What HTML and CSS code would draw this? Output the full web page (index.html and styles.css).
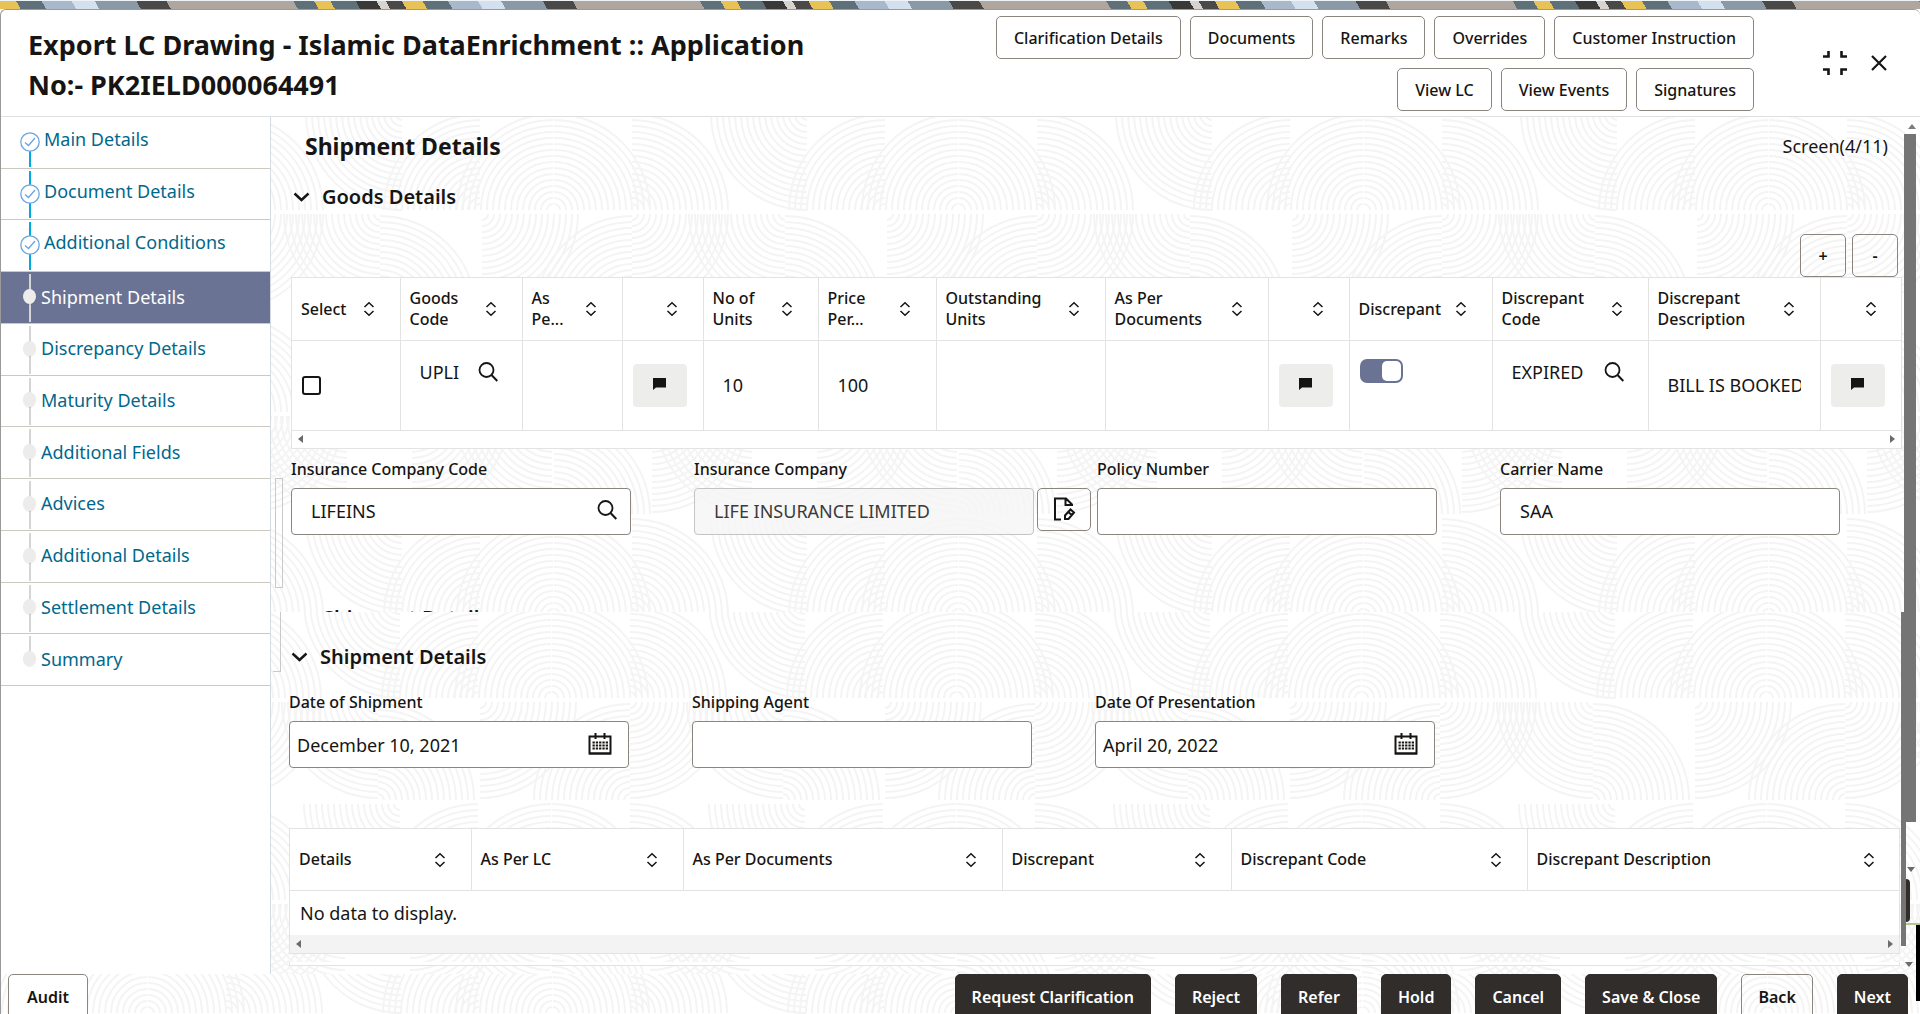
FILE: index.html
```html
<!DOCTYPE html>
<html lang="en">
<head>
    <meta charset="UTF-8">
    <title>Export LC Drawing - Islamic DataEnrichment</title>
    <link rel="stylesheet" href="styles.css">
</head>
<body>
    <!-- Shared icons -->
    <svg class="sprite" aria-hidden="true">
        <symbol id="sort" viewBox="0 0 12 16"><path d="M1.5 6 6 1.8 10.500 6M1.500 10 6 14.200 10.500 10" fill="none" stroke="#161513" stroke-width="1.500"/></symbol>
        <symbol id="search" viewBox="0 0 20 20"><circle cx="8.500" cy="8" r="7" fill="none" stroke="#161513" stroke-width="1.800"/><path d="M13.500 13 19.300 19" stroke="#161513" stroke-width="2"/></symbol>
        <symbol id="note" viewBox="0 0 13 12"><path d="M0 0H13V9.500H3L0 12Z" fill="#161513"/></symbol>
        <symbol id="chevron" viewBox="0 0 16 10"><path d="M1 1.500 8 8 15 1.500" fill="none" stroke="#161513" stroke-width="2.400"/></symbol>
        <symbol id="calendar" viewBox="0 0 24 22"><path d="M1.500 3.500H22.500V20.500H1.500Z" fill="none" stroke="#161513" stroke-width="2"/><path d="M7.500 0V6M16.500 0V6" stroke="#161513" stroke-width="2"/><path d="M4.500 9.500H20M4.500 12.500H20M4.500 15.500H20" stroke="#161513" stroke-width="2" stroke-dasharray="2.300 1"/><path d="M1 20.500H23" stroke="#161513" stroke-width="2"/></symbol>
        <symbol id="tick" viewBox="0 0 20 20"><circle cx="10" cy="10" r="9.200" fill="#fff" stroke="#6aa5e0" stroke-width="1.300"/><path d="M5 10.500 8.500 13.500 15 6" fill="none" stroke="#6aa5e0" stroke-width="1.300"/></symbol>
    </svg>

    <div class="strip"></div>

    <div class="window">
        <header class="header">
            <h1>Export LC Drawing - Islamic DataEnrichment :: Application<br>No:- PK2IELD000064491</h1>
            <div class="header-actions">
                <button class="btn">Clarification Details</button>
                <button class="btn">Documents</button>
                <button class="btn">Remarks</button>
                <button class="btn">Overrides</button>
                <button class="btn">Customer Instruction</button>
                <button class="btn">View LC</button>
                <button class="btn">View Events</button>
                <button class="btn">Signatures</button>
            </div>
            <div class="window-controls">
                <button aria-label="Collapse"><svg width="26" height="26" viewBox="0 0 26 26"><path d="M1 6.500H6.500V1M19.500 1V6.500H25M1 19.500H6.500V25M25 19.500H19.500V25" fill="none" stroke="#161513" stroke-width="2.600"/></svg></button>
                <button aria-label="Close"><svg width="18" height="18" viewBox="0 0 18 18"><path d="M2 2 16 16M16 2 2 16" stroke="#161513" stroke-width="2.200"/></svg></button>
            </div>
        </header>

        <div class="body">
            <nav class="sidebar">
                <ul class="steps">
                    <li class="done"><svg><use href="#tick"/></svg><a href="#">Main Details</a></li>
                    <li class="done"><svg><use href="#tick"/></svg><a href="#">Document Details</a></li>
                    <li class="done"><svg><use href="#tick"/></svg><a href="#">Additional Conditions</a></li>
                    <li class="active"><i></i><a href="#">Shipment Details</a></li>
                    <li><i></i><a href="#">Discrepancy Details</a></li>
                    <li><i></i><a href="#">Maturity Details</a></li>
                    <li><i></i><a href="#">Additional Fields</a></li>
                    <li><i></i><a href="#">Advices</a></li>
                    <li><i></i><a href="#">Additional Details</a></li>
                    <li><i></i><a href="#">Settlement Details</a></li>
                    <li><i></i><a href="#">Summary</a></li>
                </ul>
            </nav>

            <main class="content">
                <section class="goods">
                    <div class="page-title">
                        <h2>Shipment Details</h2>
                        <span>Screen(4/11)</span>
                    </div>
                    <h3><svg><use href="#chevron"/></svg>Goods Details</h3>
                    <div class="row-actions">
                        <button class="btn">+</button>
                        <button class="btn">-</button>
                    </div>

                    <div class="table-box">
                        <table>
                            <colgroup>
                                <col style="width:108px"><col style="width:122px"><col style="width:100px"><col style="width:81px"><col style="width:115px"><col style="width:118px"><col style="width:169px"><col style="width:163px"><col style="width:81px"><col style="width:143px"><col style="width:156px"><col style="width:172px"><col style="width:82px">
                            </colgroup>
                            <thead>
                                <tr>
                                    <th><div>Select<svg><use href="#sort"/></svg></div></th>
                                    <th><div>Goods<br>Code<svg><use href="#sort"/></svg></div></th>
                                    <th><div>As<br>Pe...<svg><use href="#sort"/></svg></div></th>
                                    <th><div><svg><use href="#sort"/></svg></div></th>
                                    <th><div>No of<br>Units<svg><use href="#sort"/></svg></div></th>
                                    <th><div>Price<br>Per...<svg><use href="#sort"/></svg></div></th>
                                    <th><div>Outstanding<br>Units<svg><use href="#sort"/></svg></div></th>
                                    <th><div>As Per<br>Documents<svg><use href="#sort"/></svg></div></th>
                                    <th><div><svg><use href="#sort"/></svg></div></th>
                                    <th><div>Discrepant<svg><use href="#sort"/></svg></div></th>
                                    <th><div>Discrepant<br>Code<svg><use href="#sort"/></svg></div></th>
                                    <th><div>Discrepant<br>Description<svg><use href="#sort"/></svg></div></th>
                                    <th><div><svg><use href="#sort"/></svg></div></th>
                                </tr>
                            </thead>
                            <tbody>
                                <tr>
                                    <td><input type="checkbox" aria-label="Select"></td>
                                    <td class="top"><div class="lookup"><input type="text" value="UPLI" aria-label="Goods Code"><svg><use href="#search"/></svg></div></td>
                                    <td></td>
                                    <td><button class="note" aria-label="Note"><svg><use href="#note"/></svg></button></td>
                                    <td><input class="cell" type="text" value="10" aria-label="No of Units"></td>
                                    <td><input class="cell" type="text" value="100" aria-label="Price Per Unit"></td>
                                    <td></td>
                                    <td></td>
                                    <td><button class="note" aria-label="Note"><svg><use href="#note"/></svg></button></td>
                                    <td class="top"><input class="switch" type="checkbox" checked aria-label="Discrepant"></td>
                                    <td class="top"><div class="lookup"><input type="text" value="EXPIRED" aria-label="Discrepant Code"><svg><use href="#search"/></svg></div></td>
                                    <td><input class="cell" type="text" value="BILL IS BOOKED" aria-label="Discrepant Description"></td>
                                    <td><button class="note" aria-label="Note"><svg><use href="#note"/></svg></button></td>
                                </tr>
                            </tbody>
                        </table>
                        <div class="hscroll"></div>
                    </div>

                    <div class="fields">
                        <div class="field">
                            <label for="insCode">Insurance Company Code</label>
                            <div class="control"><input type="text" id="insCode" value="LIFEINS"><svg class="search"><use href="#search"/></svg></div>
                        </div>
                        <div class="field">
                            <label for="insName">Insurance Company</label>
                            <div class="control"><input type="text" id="insName" value="LIFE INSURANCE LIMITED" disabled></div>
                            <button class="btn edit" aria-label="Edit"><svg width="24" height="24" viewBox="0 0 24 24"><path d="M9 22.500H3V1.500H14L20 7.500V9M13.500 2V8H20" fill="none" stroke="#161513" stroke-width="2"/><path d="M13 22V18.500L18.500 12.500 22 15.500 16.500 22ZM16 14.800 19.800 18" fill="none" stroke="#161513" stroke-width="2"/></svg></button>
                        </div>
                        <div class="field">
                            <label for="policy">Policy Number</label>
                            <div class="control"><input type="text" id="policy"></div>
                        </div>
                        <div class="field">
                            <label for="carrier">Carrier Name</label>
                            <div class="control"><input type="text" id="carrier" value="SAA"></div>
                        </div>
                    </div>
                    <!-- heading scrolled under the next panel -->
                    <div class="cutoff">Shipment Details</div>
                    <div class="splitter"></div>
                </section>

                <section class="shipment">
                    <h3><svg><use href="#chevron"/></svg>Shipment Details</h3>
                    <div class="fields">
                        <div class="field">
                            <label for="shipDate">Date of Shipment</label>
                            <div class="control"><input class="date" type="text" id="shipDate" value="December 10, 2021"><svg class="calendar"><use href="#calendar"/></svg></div>
                        </div>
                        <div class="field">
                            <label for="agent">Shipping Agent</label>
                            <div class="control"><input type="text" id="agent"></div>
                        </div>
                        <div class="field">
                            <label for="presDate">Date Of Presentation</label>
                            <div class="control"><input class="date" type="text" id="presDate" value="April 20, 2022"><svg class="calendar"><use href="#calendar"/></svg></div>
                        </div>
                    </div>

                    <div class="table-box">
                        <table>
                            <colgroup>
                                <col style="width:181px"><col style="width:212px"><col style="width:319px"><col style="width:229px"><col style="width:296px"><col style="width:373px">
                            </colgroup>
                            <thead>
                                <tr>
                                    <th><div>Details<svg><use href="#sort"/></svg></div></th>
                                    <th><div>As Per LC<svg><use href="#sort"/></svg></div></th>
                                    <th><div>As Per Documents<svg><use href="#sort"/></svg></div></th>
                                    <th><div>Discrepant<svg><use href="#sort"/></svg></div></th>
                                    <th><div>Discrepant Code<svg><use href="#sort"/></svg></div></th>
                                    <th><div>Discrepant Description<svg><use href="#sort"/></svg></div></th>
                                </tr>
                            </thead>
                            <tbody>
                                <tr><td class="empty" colspan="6">No data to display.</td></tr>
                            </tbody>
                        </table>
                        <div class="hscroll grey"></div>
                    </div>
                    <div class="box-end"></div>
                    <div class="splitter"></div>
                </section>

                <div class="scroll-up"></div>
                <div class="thumb"></div>
                <div class="inner-thumb"></div>
                <div class="edge-tab"></div>
                <div class="edge-line"></div>
                <div class="scroll-down mid"></div>
                <div class="scroll-down"></div>
            </main>
        </div>

        <footer class="footer">
            <button class="btn audit">Audit</button>
            <button class="btn dark">Request Clarification</button>
            <button class="btn dark">Reject</button>
            <button class="btn dark">Refer</button>
            <button class="btn dark">Hold</button>
            <button class="btn dark">Cancel</button>
            <button class="btn dark">Save &amp; Close</button>
            <button class="btn">Back</button>
            <button class="btn dark">Next</button>
        </footer>
    </div>
</body>
</html>
```
FILE: styles.css
```css
* { box-sizing: border-box; }
body { margin: 0; height: 100vh; overflow: hidden; display: flex; flex-direction: column; font-family: "Noto Sans", "Open Sans", sans-serif; font-size: 18px; color: #161513; background: #fff; }
h1, h2, h3, ul { margin: 0; padding: 0; }
button, input { font-family: inherit; color: inherit; }
input { font-size: 18px; }
.sprite { position: absolute; width: 0; height: 0; }

/* artwork strip above the window */
.strip { height: 9px; flex: none; border-top: 1px solid #eef3f8; background: repeating-linear-gradient(60deg, #e8c254 0 18px, #5f7079 18px 40px, #a9b9cb 40px 66px, #d5e0ee 66px 86px, #8b98a6 86px 122px, #4a4947 122px 148px, #aea69f 148px 258px, #5f7079 258px 276px, #e8c254 276px 290px, #5f7079 290px 312px, #3a3937 312px 330px, #d8d3cd 330px 338px, #4a4947 338px 352px); }

.window { flex: 1; min-height: 0; display: flex; flex-direction: column; border: 1px solid #9a9a9a; border-width: 1px 0 0 1px; border-radius: 6px 6px 0 0; }

.header { display: flex; height: 107px; flex: none; border-bottom: 1px solid #dfe0e1; padding: 6px 32px 0 27px; }
.header h1 { flex: 1; max-width: 850px; font-size: 27px; line-height: 40px; font-weight: 700; padding-top: 9px; }
.header-actions { display: flex; flex-wrap: wrap; justify-content: flex-end; align-content: flex-start; gap: 9px; width: 800px; margin-left: auto; }
.btn { height: 43px; padding: 0 17px; font-size: 16px; font-weight: 600; background: transparent; border: 1px solid #8b8580; border-radius: 5px; cursor: pointer; white-space: nowrap; }
.header .btn { background: #fff; font-weight: 500; }
.window-controls { display: flex; align-items: center; gap: 22px; margin-left: 68px; height: 94px; }
.window-controls button { border: 0; padding: 0; background: none; cursor: pointer; }
.window-controls svg { display: block; }

.body { flex: 1; min-height: 0; display: flex; }
.sidebar { width: 270px; flex: none; border-right: 1px solid #d5dbe3; background: #fff; }
.steps { list-style: none; height: 569px; display: grid; grid-auto-rows: 1fr; }
.steps li { position: relative; display: flex; align-items: center; border-bottom: 1px solid #cbc8c1; padding: 0 0 2px 40px; }
.steps li::before { content: ""; position: absolute; left: 28px; top: 2px; bottom: 1px; width: 2px; background: #d5d5d5; }
.steps li:last-child::before { bottom: 24px; }
.steps a { color: #00688c; text-decoration: none; font-size: 18px; }
.steps i { position: absolute; left: 22px; width: 13px; height: 15px; border-radius: 50%; background: #edeceb; box-shadow: 0 1px 1px #0001; }
.steps .done { padding: 0 0 7px 43px; }
.steps .done::before { background: #00a9e0; }
.steps .done:first-child::before { top: 26px; }
.steps .done svg { position: absolute; left: 19px; top: 15px; width: 20px; height: 20px; }
.steps .active { background: #6b7394; }
.steps .active a { color: #fff; }

.content { flex: 1; min-width: 0; position: relative; display: flex; flex-direction: column; }
.goods, .shipment, .footer {
    background-image: url('data:image/svg+xml,<svg xmlns="http://www.w3.org/2000/svg" width="405" height="405"><defs><path id="q" fill="none" stroke="%23f4f4f4" stroke-width="2" d="M6 0A6 6 0 0 1 0 6M12 0A12 12 0 0 1 0 12M18 0A18 18 0 0 1 0 18M24 0A24 24 0 0 1 0 24M30 0A30 30 0 0 1 0 30M36 0A36 36 0 0 1 0 36M42 0A42 42 0 0 1 0 42M48 0A48 48 0 0 1 0 48M54 0A54 54 0 0 1 0 54M60 0A60 60 0 0 1 0 60M66 0A66 66 0 0 1 0 66M72 0A72 72 0 0 1 0 72M78 0A78 78 0 0 1 0 78M84 0A84 84 0 0 1 0 84M90 0A90 90 0 0 1 0 90M96 0A96 96 0 0 1 0 96"/><g id="r"><use href="%23q" transform="translate(202 99) scale(1 -1)"/><use href="%23q" transform="translate(201 99) scale(-1 -1)"/><use href="%23q" transform="translate(280 99) scale(1 -1)"/><use href="%23q" transform="translate(128 99) scale(-1 -1)"/><use href="%23q" transform="translate(50 3) scale(-1 1)"/><use href="%23q" transform="translate(455 3) scale(-1 1)"/></g></defs><use href="%23r"/><use href="%23q" transform="translate(130 103)"/><use href="%23q" transform="translate(28 103) scale(-1 1)"/><use href="%23q" transform="translate(433 103) scale(-1 1)"/><use href="%23q" transform="translate(28 201) scale(1 -1)"/><use href="%23q" transform="translate(280 103)"/><use href="%23q" transform="translate(280 201) scale(-1 -1)"/><use href="%23r" transform="translate(0 202)"/><use href="%23q" transform="translate(60 305)"/><use href="%23q" transform="translate(200 305) scale(-1 1)"/><use href="%23q" transform="translate(202 403) scale(1 -1)"/><use href="%23q" transform="translate(400 305) scale(-1 1)"/><use href="%23q" transform="translate(300 305)"/></svg>');
}
.goods { height: 495px; flex: none; position: relative; overflow: hidden; padding: 0 18px 0 20px; background-position: 81px -6px; }
.shipment { flex: 1; position: relative; overflow: hidden; padding: 22px 20px 0 18px; background-position: 79px -13px; }
.page-title { display: flex; justify-content: space-between; align-items: center; height: 57px; padding: 0 14px; }
.page-title h2 { font-size: 23px; font-weight: 700; }
h3 { display: flex; align-items: center; gap: 12px; height: 45px; font-size: 20px; font-weight: 600; padding-left: 2px; }
h3 svg { width: 17px; height: 10px; }
.row-actions { display: flex; justify-content: flex-end; gap: 6px; padding: 15px 4px 0 0; }
.row-actions .btn { width: 46px; }

.table-box { background: #fff; border: 1px solid #e3e3e2; }
table { width: 100%; table-layout: fixed; border-collapse: collapse; }
th { height: 62px; padding: 1px 25px 0 9px; text-align: left; font-size: 16px; line-height: 21px; font-weight: 500; border-right: 1px solid #e3e3e2; border-bottom: 1px solid #e3e3e2; }
th div { position: relative; white-space: nowrap; min-height: 16px; }
th svg { position: absolute; right: 0; top: calc(50% - 8px); width: 12px; height: 16px; }
th:last-child, td:last-child { border-right: 0; }
td { height: 90px; padding: 0 10px; border-right: 1px solid #e3e3e2; border-bottom: 1px solid #e3e3e2; }
.top { vertical-align: top; padding-top: 18px; }
.lookup { display: flex; align-items: center; padding: 0 14px 0 9px; gap: 18px; }
.lookup input, .cell { flex: 1; min-width: 0; border: 0; padding: 0; background: none; height: 26px; }
.cell { width: 100%; padding: 0 9px; display: block; }
.lookup svg { width: 20px; height: 20px; flex: none; }
td input[type=checkbox] { display: block; appearance: none; width: 19px; height: 19px; margin: 0; border: 2px solid #161513; border-radius: 3px; }
td input.switch { width: 43px; height: 24px; border: 0; border-radius: 7px; background: #6b7394; position: relative; }
.switch::after { content: ""; position: absolute; right: 2px; top: 2px; width: 19px; height: 20px; border-radius: 5px; background: #fff; }
.note { width: 100%; max-width: 54px; height: 43px; margin: 0; padding: 0; border: 0; border-radius: 4px; background: #ededeb; display: block; }
.note svg { width: 13px; height: 12px; }

.hscroll { display: flex; justify-content: space-between; align-items: center; height: 17px; padding: 0 6px; }
.hscroll::before, .hscroll::after { content: ""; border: 4px solid transparent; border-left-width: 0; border-right: 5px solid #6b6b6b; }
.hscroll::after { border-right: 0; border-left: 5px solid #6b6b6b; }
.hscroll.grey { background: #f3f3f3; }

.fields { display: grid; grid-template-columns: repeat(4, 1fr); margin-right: -1px; }
.field { display: grid; grid-template-columns: 1fr 63px; align-items: start; }
.field label { grid-column: 1 / -1; font-size: 16px; font-weight: 500; line-height: 40px; height: 39px; white-space: nowrap; }
.control { position: relative; }
.control input { width: 100%; height: 47px; border: 1px solid #8b8580; border-radius: 4px; background: #fff; padding: 0 19px; display: block; }
.control input.date { padding: 0 7px; }
.control input:disabled { background: #f5f5f5cc; border-color: #c4c4c3; color: #3c3b3a; }
.control svg { position: absolute; right: 14px; top: 12px; width: 20px; height: 20px; }
.control .calendar { right: 17px; width: 24px; height: 22px; }
.edit { width: 54px; padding: 0; margin-left: 3px; }
.edit svg { display: block; margin: 0 auto; }

.cutoff { position: absolute; left: 52px; bottom: -21px; font-size: 20px; line-height: 30px; font-weight: 600; }
.splitter { position: absolute; left: 4px; width: 8px; border: 1px solid #c9c9c9; }
.goods .splitter { top: 361px; height: 110px; }
.shipment .splitter { left: 2px; top: 0; height: 60px; border-width: 0 1px 1px 0; }

.shipment .fields { margin-top: 3px; }
.shipment .table-box { margin-top: 60px; }
.shipment .hscroll { height: 18px; }
.shipment th { height: 61px; }
.shipment td { height: 45px; border-bottom: 0; }
.empty { font-size: 18px; }
.box-end { margin-top: 8px; height: 4px; background: #fff; border: 1px solid #e3e3e2; border-top: 0; }

/* page scrollbars */
.scroll-up { position: absolute; right: 4px; top: 7px; border: 4px solid transparent; border-top: 0; border-bottom: 5px solid #7c7c7c; }
.thumb { position: absolute; right: 4px; top: 17px; width: 12px; height: 688px; background: #757575; }
.inner-thumb { position: absolute; right: 14px; top: 495px; width: 5px; height: 334px; background: #757575; }
.edge-tab { position: absolute; right: 10px; top: 762px; width: 4px; height: 43px; background: #312d2a; border-radius: 0 4px 4px 0; }
.edge-line { position: absolute; right: 0; top: 806px; width: 14px; height: 2px; background: #b7c492; }
.edge-line::after { content: ""; position: absolute; right: 0; top: 2px; width: 4px; height: 76px; background: #000; }
.scroll-down { position: absolute; right: 7px; top: 845px; border: 4px solid transparent; border-bottom: 0; border-top: 5px solid #6b6b6b; }
.scroll-down.mid { right: 5px; top: 750px; }

.footer { display: flex; gap: 24px; height: 40px; flex: none; padding: 0 12px 0 7px; overflow: hidden; background-position: 350px -60px; }
.footer .btn { height: 45px; padding: 0 16px; }
.footer .audit { margin-right: auto; padding: 0 18px; background: #fff; }
.btn.dark { background: #312d2a; border-color: #312d2a; color: #fff; }
```
